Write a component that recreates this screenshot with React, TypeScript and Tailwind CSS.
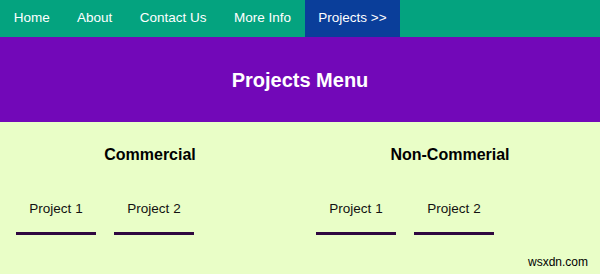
import React from 'react';

const NAV = ['Home', 'About', 'Contact Us', 'More Info'];

const SECTIONS = [
  { title: 'Commercial', items: ['Project 1', 'Project 2'] },
  { title: 'Non-Commerial', items: ['Project 1', 'Project 2'] },
];

export default function App() {
  return (
    <div className="relative flex h-[274px] w-[600px] flex-col bg-[#e9fec7] font-['Liberation_Sans',Arial,sans-serif]">
      <nav className="flex h-[37px] bg-[#04a37f] text-[13.5px] text-white">
        {NAV.map((n) => (
          <a key={n} className="flex items-center px-[13.7px]">
            {n}
          </a>
        ))}
        <a className="flex items-center bg-[#0a3e9a] px-[13.7px]">Projects &gt;&gt;</a>
      </nav>

      <header className="flex h-[85px] items-center justify-center bg-[#7208b8]">
        <h1 className="text-[20px] font-bold text-white">Projects Menu</h1>
      </header>

      <div className="flex flex-1">
        {SECTIONS.map((s) => (
          <section key={s.title} className="flex w-1/2 flex-col px-[16px] pt-[24px]">
            <h2 className="text-center text-[16px] font-bold leading-[18px] text-black">{s.title}</h2>
            <div className="mt-[36px] flex gap-[18px]">
              {s.items.map((p) => (
                <div
                  key={p}
                  className="w-[80px] border-b-[3px] border-[#2f0840] pb-[14px] text-center text-[13.5px] leading-[18px] text-[#111]"
                >
                  {p}
                </div>
              ))}
            </div>
          </section>
        ))}
      </div>

      <span className="absolute bottom-[3px] right-[12px] text-[12px] text-black">wsxdn.com</span>
    </div>
  );
}
